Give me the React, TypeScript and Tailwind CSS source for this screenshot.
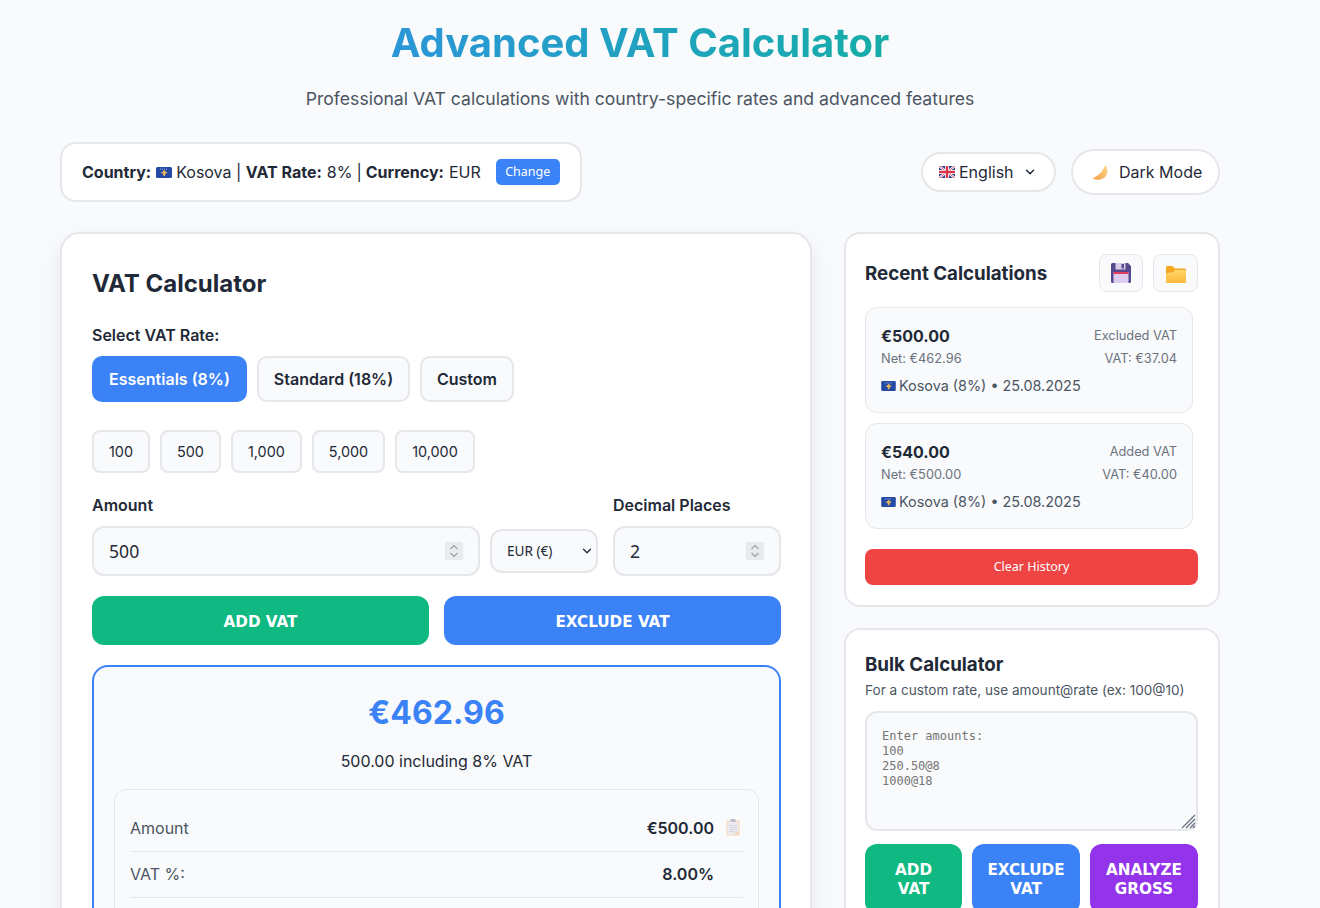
import { ChevronDown } from "lucide-react";

const quickAmounts = ["100", "500", "1,000", "5,000", "10,000"];

const history = [
    { total: "€500.00", kind: "Excluded VAT", net: "Net: €462.96", vat: "VAT: €37.04" },
    { total: "€540.00", kind: "Added VAT", net: "Net: €500.00", vat: "VAT: €40.00" },
];

function KosovoFlag({ className }: { className: string }) {
    return (
        <svg viewBox="0 0 16 11" className={className}>
            <rect width="16" height="11" rx="1.500" fill="#244aa5" />
            <path d="M8 3l2 1.800 1.500.8-2 1.200-.5 2.200H7.500L7 6.800 4.500 5.600 6.500 5z" fill="#e3b45c" />
            <path d="M4 2.200h8" stroke="#c9d3ef" strokeWidth="0.800" strokeDasharray="1 1" />
        </svg>
    );
}

function UkFlag({ className }: { className: string }) {
    return (
        <svg viewBox="0 0 16 12" className={className}>
            <rect width="16" height="12" fill="#2b3f8f" />
            <path d="M0 0l16 12M16 0L0 12" stroke="#fff" strokeWidth="2.400" />
            <path d="M0 0l16 12M16 0L0 12" stroke="#d8344b" strokeWidth="0.800" />
            <path d="M8 0v12M0 6h16" stroke="#fff" strokeWidth="4" />
            <path d="M8 0v12M0 6h16" stroke="#d8344b" strokeWidth="2.400" />
        </svg>
    );
}

function Moon({ className }: { className: string }) {
    return (
        <svg viewBox="0 0 16 16" className={className}>
            <defs>
                <linearGradient id="moonFill" x1="1" y1="0" x2="0" y2="1">
                    <stop offset="0" stopColor="#ffd98a" />
                    <stop offset="1" stopColor="#f4a04a" />
                </linearGradient>
            </defs>
            <path d="M13.500 1C16.500 6 16.500 13.500 8.500 15.500 5 16.300 2 15.500.5 14 5 13 10.500 8 13.500 1z" fill="url(#moonFill)" />
        </svg>
    );
}

function Floppy({ className }: { className: string }) {
    return (
        <svg viewBox="0 0 20 20" className={className}>
            <path d="M1.500 0H17l3 3v15.500a1.500 1.500 0 0 1-1.500 1.500h-17A1.500 1.500 0 0 1 0 18.500v-17A1.500 1.500 0 0 1 1.500 0z" fill="#54488f" />
            <rect x="4.500" y="0" width="10" height="6.500" fill="#d9cdea" />
            <rect x="10.500" y="1" width="2.500" height="4.500" fill="#54488f" />
            <rect x="2.500" y="9" width="15" height="11" fill="#dccdee" />
            <rect x="2.500" y="9" width="15" height="2" fill="#e23d5c" />
        </svg>
    );
}

function Folder({ className }: { className: string }) {
    return (
        <svg viewBox="0 0 20 17" className={className}>
            <defs>
                <linearGradient id="folderFill" x1="0" y1="0" x2="0" y2="1">
                    <stop offset="0" stopColor="#ffd766" />
                    <stop offset="1" stopColor="#ffb93c" />
                </linearGradient>
            </defs>
            <path d="M1.500 0h5l2.500 2.500h9.500A1.500 1.500 0 0 1 20 4v11.500a1.500 1.500 0 0 1-1.500 1.500h-17A1.500 1.500 0 0 1 0 15.500v-14A1.500 1.500 0 0 1 1.500 0z" fill="#f5a623" />
            <path d="M1.500 17A1.500 1.500 0 0 1 0 15.500V8.500A1.500 1.500 0 0 1 1.500 7L7 6l2-2h9.500A1.500 1.500 0 0 1 20 5.500v10a1.500 1.500 0 0 1-1.500 1.500z" fill="url(#folderFill)" />
        </svg>
    );
}

function ClipboardIcon({ className }: { className: string }) {
    return (
        <svg viewBox="0 0 14 17" className={className}>
            <rect x="0.500" y="1.500" width="13" height="15" rx="1" fill="#f6d9bf" />
            <path d="M1.500 3H12.500V12.500L9 15.500H1.500z" fill="#ecebf2" />
            <path d="M9 15.500L12.500 12.500H9z" fill="#f6d9bf" />
            <rect x="4.500" y="0" width="5" height="3" rx="0.500" fill="#bdbdc9" />
            <path d="M3 6.500h8M3 8.500h8M3 10.500h8M3 12.500h5" stroke="#d5d5e0" strokeWidth="1" />
        </svg>
    );
}

function NumberBox({ value, className }: { value: string; className: string }) {
    return (
        <div className={`relative ${className}`}>
            <input
                type="number"
                defaultValue={value}
                className="h-[50px] w-full rounded-xl border-2 border-[#e5e7eb] bg-[#f9fafb] px-[15px] text-[17.6px] text-[#1f2937] outline-none font-['Noto_Sans',sans-serif] [appearance:textfield] [&::-webkit-inner-spin-button]:appearance-none"
            />
            {/* always visible spinner */}
            <div className="absolute right-[17px] top-[16px] flex h-[18px] w-[18px] items-center justify-center bg-[#e9eaee]">
                <svg viewBox="0 0 10 14" className="h-[14px] w-[10px]" fill="none" stroke="#9a9ea8" strokeWidth="1.100">
                    <path d="M1.500 5L5 1.500 8.500 5M1.500 9L5 12.500 8.500 9" />
                </svg>
            </div>
        </div>
    );
}

export default function App() {
    return (
        <div className="h-screen overflow-hidden bg-[#f9fafb] text-[#1f2937] font-['Inter',sans-serif]">
            <div className="ml-[60px] w-[1160px]">
                {/* Header */}
                <header className="text-center pt-[17px]">
                    <h1 className="text-[40px] leading-[52px] font-bold bg-gradient-to-r from-[#3b82f6] to-[#10b981] bg-clip-text text-transparent">
                        Advanced VAT Calculator
                    </h1>
                    <p className="mt-[16px] text-[17.6px] leading-[28px] text-[#4b5563]">
                        Professional VAT calculations with country-specific rates and advanced features
                    </p>
                </header>

                {/* Top bar */}
                <div className="mt-[29px] flex items-center justify-between">
                    <div className="flex h-[60px] w-[522px] items-center rounded-2xl border-2 border-[#e5e7eb] bg-white pl-[20px] text-[16px]">
                        <b className="font-bold">Country:</b>
                        <KosovoFlag className="ml-[5px] h-[11px] w-[16px]" />
                        <span className="ml-[4px]">Kosova</span>
                        <span className="mx-[4.5px]">|</span>
                        <b className="font-bold">VAT Rate:</b>
                        <span className="ml-[5px]">8%</span>
                        <span className="mx-[4px]">|</span>
                        <b className="font-bold">Currency:</b>
                        <span className="ml-[5px]">EUR</span>
                        <button className="ml-[15px] h-[26px] w-[64px] rounded-[5px] bg-[#3b82f6] pt-[1px] text-[12.5px] text-white font-['Noto_Sans',sans-serif]">
                            Change
                        </button>
                    </div>
                    <div className="flex items-center gap-[15px]">
                        <div className="flex h-[40px] w-[135px] items-center rounded-full border-2 border-[#e5e7eb] bg-white pl-[16px] text-[16px]">
                            <UkFlag className="h-[12px] w-[16px]" />
                            <span className="ml-[4px]">English</span>
                            <ChevronDown className="ml-[9px] h-[14px] w-[14px] text-[#1f2937]" strokeWidth={2.5} />
                        </div>
                        <button className="flex h-[46px] w-[149px] items-center rounded-full border-2 border-[#e5e7eb] bg-white pl-[19px] text-[16px]">
                            <Moon className="h-[16px] w-[16px]" />
                            <span className="ml-[11px]">Dark Mode</span>
                        </button>
                    </div>
                </div>

                {/* Main grid */}
                <div className="mt-[30px] grid grid-cols-[752px_376px] gap-[32px]">
                    <section className="rounded-[20px] border-2 border-[#e5e7eb] bg-white pt-[30px] pb-[30px] pl-[30px] pr-[29px] shadow-[0_10px_25px_rgba(0,0,0,0.08)]">
                        <h2 className="text-[24px] leading-[40px] font-bold">VAT Calculator</h2>
                        <div className="mt-[19px] text-[16px] leading-[24px] font-semibold">Select VAT Rate:</div>

                        <div className="mt-[9px] flex gap-[10px]">
                            <button className="h-[46px] w-[155px] rounded-[10px] bg-[#3b82f6] text-[16px] font-semibold text-white">Essentials (8%)</button>
                            <button className="h-[46px] w-[153px] rounded-[10px] border-2 border-[#e5e7eb] bg-[#f9fafb] text-[16px] font-semibold">Standard (18%)</button>
                            <button className="h-[46px] w-[94px] rounded-[10px] border-2 border-[#e5e7eb] bg-[#f9fafb] text-[16px] font-semibold">Custom</button>
                        </div>

                        <div className="mt-[28px] flex gap-[10px]">
                            {quickAmounts.map(a => (
                                <button key={a} className="h-[43px] rounded-lg border-2 border-[#e5e7eb] bg-[#f9fafb] px-[15px] text-[14.4px]">
                                    {a}
                                </button>
                            ))}
                        </div>

                        <div className="mt-[20px] flex">
                            <div className="w-[521px] text-[16px] leading-[24px] font-semibold">Amount</div>
                            <div className="text-[16px] leading-[24px] font-semibold">Decimal Places</div>
                        </div>
                        <div className="mt-[9px] flex items-center">
                            <NumberBox value="500" className="w-[388px]" />
                            <div className="relative ml-[10px] w-[108px]">
                                <select className="h-[44px] w-full appearance-none rounded-xl border-2 border-[#e5e7eb] bg-[#f9fafb] pl-[15px] text-[13.6px] font-['Noto_Sans',sans-serif] outline-none">
                                    <option>EUR (€)</option>
                                </select>
                                <ChevronDown className="pointer-events-none absolute right-[4px] top-[15px] h-[14px] w-[14px] text-[#1f2937]" strokeWidth={2.2} />
                            </div>
                            <NumberBox value="2" className="ml-[15px] w-[168px]" />
                        </div>

                        <div className="mt-[20px] grid grid-cols-2 gap-[15px]">
                            <button className="h-[49px] rounded-xl bg-[#10b981] pt-[3px] text-[15.2px] font-bold text-white font-['DejaVu_Sans',sans-serif]">ADD VAT</button>
                            <button className="h-[49px] rounded-xl bg-[#3b82f6] pt-[3px] text-[15.2px] font-bold text-white font-['DejaVu_Sans',sans-serif]">EXCLUDE VAT</button>
                        </div>

                        <div className="mt-[20px] rounded-2xl border-2 border-[#3b82f6] bg-[#f9fafb] px-[20px] pt-[20px] pb-[20px]">
                            <div className="text-center text-[32px] leading-[52px] font-bold text-[#3b82f6]">€462.96</div>
                            <div className="mt-[10px] text-center text-[16px] leading-[24px]">500.00 including 8% VAT</div>
                            <div className="mt-[16px] rounded-xl border border-[#e5e7eb] bg-[#f9fafb] px-[15px] pt-[15px]">
                                <div className="flex h-[47px] items-center justify-between border-b border-[#e5e7eb] pb-[1px] text-[16px]">
                                    <span className="text-[#4b5563]">Amount</span>
                                    <span className="flex items-center font-semibold">
                                        €500.00
                                        <ClipboardIcon className="ml-[12px] mr-[3px] h-[17px] w-[14px]" />
                                    </span>
                                </div>
                                <div className="flex h-[46px] items-center justify-between border-b border-[#e5e7eb] pb-[1px] text-[16px]">
                                    <span className="text-[#4b5563]">VAT %:</span>
                                    <span className="mr-[29px] font-semibold">8.00%</span>
                                </div>
                                <div className="flex h-[46px] items-center justify-between border-b border-[#e5e7eb] text-[16px]">
                                    <span className="text-[#4b5563]">VAT Amount</span>
                                    <span className="mr-[29px] font-semibold">€37.04</span>
                                </div>
                            </div>
                        </div>
                    </section>

                    <aside className="flex flex-col gap-[21px]">
                        <section className="h-[375px] rounded-2xl border-2 border-[#e5e7eb] bg-white pl-[19px] pr-[20px] pt-[20px]">
                            <div className="flex items-center justify-between">
                                <h3 className="pt-[2px] text-[18.72px] font-bold">Recent Calculations</h3>
                                <div className="flex gap-[10px]">
                                    <button className="flex h-[38px] w-[44px] items-center justify-center rounded-lg border border-[#e5e7eb] bg-[#f9fafb]">
                                        <Floppy className="h-[20px] w-[20px]" />
                                    </button>
                                    <button className="flex h-[38px] w-[45px] items-center justify-center rounded-lg border border-[#e5e7eb] bg-[#f9fafb]">
                                        <Folder className="mt-[2px] h-[17px] w-[20px]" />
                                    </button>
                                </div>
                            </div>
                            <div className="mt-[15px] w-[328px] flex flex-col gap-[10px]">
                                {history.map(h => (
                                    <div key={h.total} className="h-[106px] rounded-xl border border-[#e5e7eb] bg-[#f9fafb] px-[15px] pt-[16px]">
                                        <div className="flex items-center justify-between">
                                            <span className="text-[16px] leading-[24px] font-bold">{h.total}</span>
                                            <span className="text-[12.8px] text-[#6b7280]">{h.kind}</span>
                                        </div>
                                        <div className="mt-[1px] flex justify-between text-[12.8px] leading-[20px] text-[#6b7280]">
                                            <span>{h.net}</span>
                                            <span>{h.vat}</span>
                                        </div>
                                        <div className="mt-[6px] flex items-center text-[14.4px] leading-[22px] text-[#4b5563]">
                                            <KosovoFlag className="mr-[3px] h-[10px] w-[15px]" />
                                            Kosova (8%) • 25.08.2025
                                        </div>
                                    </div>
                                ))}
                            </div>
                            <button className="mt-[20px] h-[36px] w-full rounded-lg bg-[#ef4444] pt-[1px] text-[12.5px] text-white font-['Noto_Sans',sans-serif]">
                                Clear History
                            </button>
                        </section>

                        <section className="rounded-2xl border-2 border-[#e5e7eb] bg-white pl-[19px] pr-[20px] pt-[20px] pb-[20px]">
                            <h3 className="text-[18.72px] leading-[30px] font-bold">Bulk Calculator</h3>
                            <p className="text-[13.6px] leading-[20px] text-[#4b5563]">For a custom rate, use amount@rate (ex: 100@10)</p>
                            <div className="relative mt-[11px]">
                                <textarea
                                    className="block h-[120px] w-full resize-none rounded-xl border-2 border-[#e5e7eb] bg-[#f9fafb] px-[15px] pt-[16px] text-[12px] leading-[15px] font-['DejaVu_Sans_Mono',monospace] outline-none placeholder:text-[#757575]"
                                    placeholder={"Enter amounts:\n100\n250.50@8\n1000@18"}
                                />
                                {/* resize grip */}
                                <svg viewBox="0 0 15 15" className="pointer-events-none absolute bottom-[2px] right-[2px] h-[15px] w-[15px]" stroke="#6b7280" strokeWidth="1.300">
                                    <path d="M1 14L14 1M5 14L14 5M9 14L14 9M12 14L14 12" />
                                </svg>
                            </div>
                            <div className="mt-[13px] flex gap-[10px]">
                                <button className="h-[70px] w-[97px] rounded-xl bg-[#10b981] pt-[2px] text-[15.2px] leading-[19px] font-bold text-white font-['DejaVu_Sans',sans-serif]">ADD<br />VAT</button>
                                <button className="h-[70px] w-[108px] rounded-xl bg-[#3b82f6] pt-[2px] text-[15.2px] leading-[19px] font-bold text-white font-['DejaVu_Sans',sans-serif]">EXCLUDE<br />VAT</button>
                                <button className="h-[70px] w-[108px] rounded-xl bg-[#9333ea] pt-[2px] text-[15.2px] leading-[19px] font-bold text-white font-['DejaVu_Sans',sans-serif]">ANALYZE<br />GROSS</button>
                            </div>
                        </section>
                    </aside>
                </div>
            </div>
        </div>
    );
}
